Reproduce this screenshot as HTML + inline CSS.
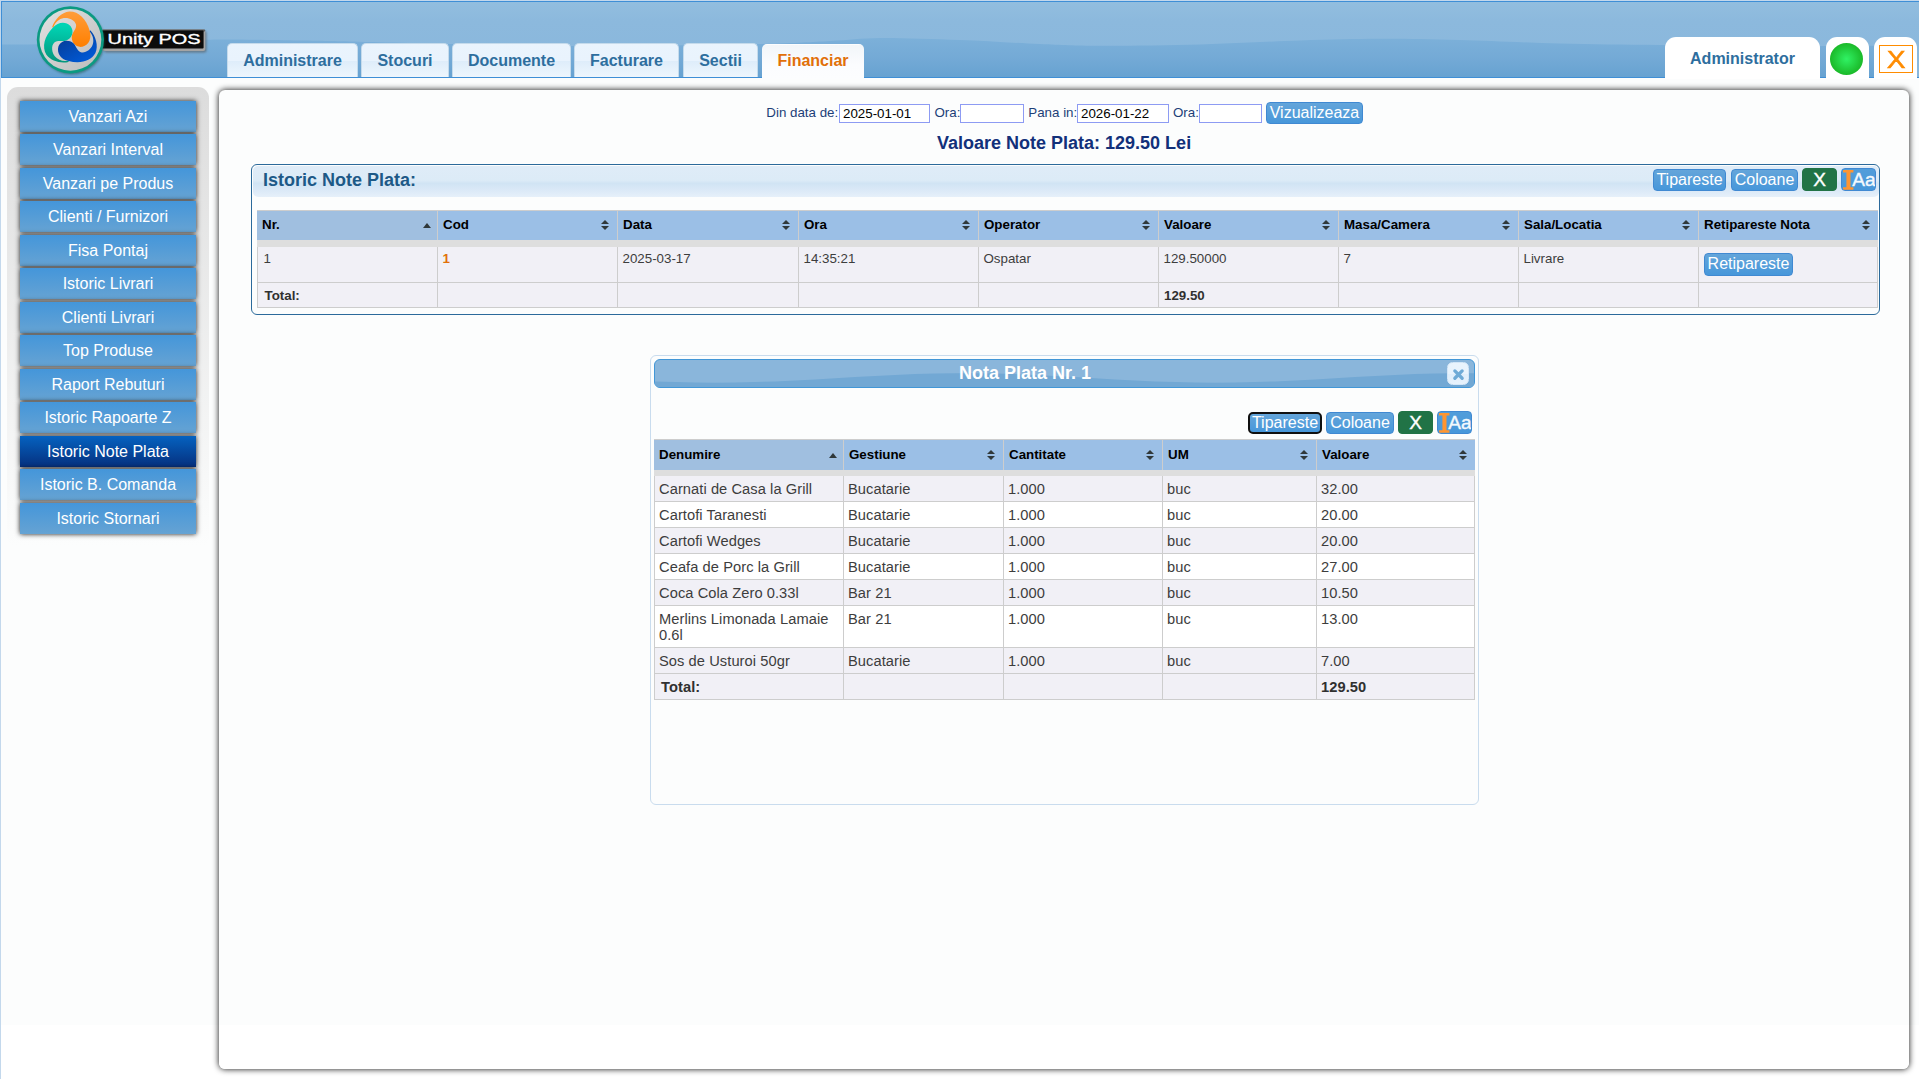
<!DOCTYPE html>
<html lang="ro">
<head>
<meta charset="utf-8">
<title>Unity POS</title>
<style>
*{box-sizing:border-box}
html,body{margin:0;padding:0}
body{width:1919px;height:1079px;overflow:hidden;position:relative;background:#fcfdfd;font-family:"Liberation Sans",Arial,sans-serif;font-size:13.33px;color:#222}
#bottomfade{position:absolute;left:0;top:1025px;width:1919px;height:54px;background:#fff}
#leftline{position:absolute;left:0;top:0;width:1px;height:1079px;background:#c3d8ec}
#topline{position:absolute;left:0;top:0;width:1919px;height:1px;background:#c3d8ec}
/* header */
#hdr{position:absolute;left:1px;top:1px;width:1930px;height:77px;border:1px solid #3f8fd6;background:linear-gradient(#92bedf 0,#8cb9dd 25%,#89b7dc 100%);overflow:hidden}
#hdr svg.wave{position:absolute;left:0;top:0}
.tab{position:absolute;top:43px;height:34px;border:1px solid #c5dbec;border-bottom:0;border-radius:5px 5px 0 0;font-weight:bold;font-size:16px;color:#2e6e9e;text-align:center;line-height:18px;padding-top:8px;
 background:linear-gradient(#eaf4fd 0,#e9f3fd 50%,#deedfa 52%,#eef6fd 100%)}
.tab.act{top:44px;padding-top:7px;background:linear-gradient(#f2f6f9,#fbfcfe 60%,#fcfdfe);color:#e17009;border-color:transparent;height:34.5px}
.rtab{position:absolute;background:#fff;border-radius:11px 11px 0 0;top:37px;height:42px}
/* sidebar */
#side{position:absolute;left:7px;top:87px;width:202px;height:460px;border-radius:11px;background:linear-gradient(#dcdcdc,#fcfdfd)}
.sb{position:absolute;left:20px;width:176px;height:31px;color:#fff;font-size:16px;text-align:center;line-height:31px;background:linear-gradient(#4496da,#66a3d3);box-shadow:0 0 5px rgba(0,0,0,.9)}
.sb.act{background:linear-gradient(#0562c0,#06307e)}
/* main */
#main{position:absolute;left:219px;top:90px;width:1690px;height:979px;border-radius:6px;background:#fcfdfd;box-shadow:0 0 6px rgba(0,0,0,.95)}
#mainfade{position:absolute;left:219px;top:1025px;width:1690px;height:44px;background:#fff;border-radius:0 0 6px 6px}
.btn{position:absolute;background:linear-gradient(#64a5da,#4797da);color:#fff;border:1px solid #4089d2;border-radius:4px;font-size:16px;text-align:center;white-space:nowrap}
.abs{position:absolute}

.lbl{font-size:13.33px;color:#1c3f78;line-height:16px;white-space:nowrap}
.inp{position:absolute;top:104px;height:18.5px;border:1px solid #8d9bf3;background:#fff;font-size:13.33px;color:#000;line-height:17.5px;padding-left:3px;white-space:nowrap}
.btn.xg{background:#217346;border-color:#217346;font-size:19px;-webkit-text-stroke:.4px #fff}
.btn.aa{background:linear-gradient(#529dda,#4797da);overflow:hidden}
.btn.aa svg.ib{position:absolute;left:1px;top:1px}
.btn.aa span{-webkit-text-stroke:.4px #f4f9fd;position:absolute;left:10.3px;top:0;font-size:19px;line-height:22px;color:#f4f9fd}
.btn.foc{border:2px solid #101010;border-radius:5px}
table.grid{position:absolute;border-collapse:separate;border-spacing:0;table-layout:fixed;font-size:13.33px;color:#3d3d3d}
table.grid th{position:relative;height:30px;background:#9bbfe6;border-top:1px solid #cdcdcd;border-left:1px solid #cdcdcd;color:#000;font-weight:bold;font-size:13.33px;text-align:left;padding:0 0 2px 5px;vertical-align:middle;white-space:nowrap}
table.grid th:first-child{border-left:0;padding-left:5px}
table.grid th.asc{background:#a0bfe0}
table.grid th:before,table.grid th:after{content:"";position:absolute;right:8px;border-left:4px solid transparent;border-right:4px solid transparent}
table.grid th:before{top:9px;border-bottom:4.5px solid #30383a}
table.grid th:after{top:15px;border-top:4.5px solid #30383a}
table.grid th.asc:before{top:12px;border-bottom-width:5px;right:6px}
table.grid th.asc:after{display:none}
table.grid tr.band td{height:7px;background:#dedede;border:0;padding:0}
table.grid td{background:#fff;border-left:1px solid #cdcdcd;border-bottom:1px solid #cdcdcd;padding:3.5px 5px 0 4.5px;vertical-align:top;line-height:16px}
table.grid td:last-child{border-right:1px solid #cdcdcd}
table.g1 td{background:#f1f0f6}
table.grid tr.tot td{font-weight:bold;color:#222}
table.g2{font-size:14.67px}
table.g2 td{font-size:14.67px;line-height:16px;padding:5px 4px 0 4px;letter-spacing:.07px}
table.g2 tr.tot td{padding-left:6px;color:#303030}
table.g2 tr.tot td:last-child{padding-left:4px}
table.g1 td:first-child{padding-left:5.5px}
table.g1 tr.tot td{padding-top:4.5px;padding-left:5px;color:#303030}
table.g1 tr.tot td:first-child{padding-left:6.5px}
table.g2 tr{height:26px}
table.g2 tr.band{height:auto}
table.g2 tr.band td{height:6px}
table.g2 th{height:31px;padding-bottom:1px}
table.g2 th:before{top:10px}
table.g2 th:after{top:16px}
table.g2 th.asc:before{top:13px}
table.g2 tr.o td{background:#f1f0f6}
</style>
</head>
<body>
<div id="bottomfade"></div>
<div id="topline"></div>
<div id="leftline"></div>

<div id="hdr">
<svg class="wave" width="1915" height="75" viewBox="0 0 1915 75"><defs><linearGradient id="wg" x1="0" y1="0" x2="0" y2="1"><stop offset="0" stop-color="#7cb0d9"/><stop offset="0.5" stop-color="#74aad6"/><stop offset="1" stop-color="#67a2d1"/></linearGradient></defs><path d="M-2.0,42.5 C39.7,42.3 113.0,42.6 148.0,41.8 C183.0,41.0 183.0,38.3 208.0,37.8 C233.0,37.2 273.0,38.2 298.0,38.5 C323.0,38.8 328.0,39.0 358.0,39.7 C388.0,40.4 438.0,41.8 478.0,42.5 C518.0,43.2 551.3,44.1 598.0,44.0 C644.7,43.9 719.7,42.8 758.0,42.0 C796.3,41.2 808.0,40.0 828.0,39.0 C848.0,38.0 856.3,36.2 878.0,36.0 C899.7,35.8 931.3,37.0 958.0,38.0 C984.7,39.0 1014.7,41.0 1038.0,42.0 C1061.3,43.0 1071.3,43.7 1098.0,43.8 C1124.7,43.9 1164.7,43.4 1198.0,42.5 C1231.3,41.6 1268.0,39.5 1298.0,38.5 C1328.0,37.5 1351.3,36.8 1378.0,36.8 C1404.7,36.7 1428.0,37.2 1458.0,38.0 C1488.0,38.8 1524.7,40.7 1558.0,41.5 C1591.3,42.3 1621.3,42.6 1658.0,43.0 C1694.7,43.4 1735.2,43.9 1778.0,44.0 C1820.8,44.1 1878.3,43.7 1915.0,43.5 L1915,75 L-2,75 Z" fill="url(#wg)"/></svg>
</div>

<!-- tabs -->
<div class="tab" style="left:227px;width:131px">Administrare</div>
<div class="tab" style="left:361px;width:88px">Stocuri</div>
<div class="tab" style="left:452px;width:119px">Documente</div>
<div class="tab" style="left:574px;width:105px">Facturare</div>
<div class="tab" style="left:683px;width:75px">Sectii</div>
<div class="tab act" style="left:762px;width:102px">Financiar</div>

<div class="rtab" style="left:1665px;width:155px;font-weight:bold;font-size:16px;color:#2e6e9e;text-align:center;line-height:18px;padding-top:13px">Administrator</div>
<div class="rtab" style="left:1826px;width:43px"><div class="abs" style="left:4px;top:6px;width:33px;height:32px;border-radius:50%;background:radial-gradient(ellipse at 50% 50%,#30f264 0,#1fc535 55%,#12a412 100%)"></div></div>
<div class="rtab" style="left:1874px;width:43px"><div class="abs" style="left:5px;top:8px;width:34px;height:28px;border:1px solid #ff8c00;color:#ff8c00;font-size:24.5px;line-height:27px;text-align:center;-webkit-text-stroke:.5px #ff8c00"><span style="display:inline-block;transform:scaleX(1.15)">X</span></div></div>

<!-- logo -->
<svg class="abs" style="left:30px;top:0" width="185" height="80" viewBox="30 0 185 80">
<defs>
<linearGradient id="lgG" x1="0" y1="0" x2="1" y2="1"><stop offset="0" stop-color="#e2e2e2"/><stop offset="1" stop-color="#bcbcbc"/></linearGradient>
<linearGradient id="lgO" x1="0" y1="0" x2="0" y2="1"><stop offset="0" stop-color="#ff9d3a"/><stop offset="1" stop-color="#ff7f00"/></linearGradient>
<linearGradient id="lgT" x1=".93" y1=".75" x2=".07" y2=".25"><stop offset="0" stop-color="#00d4b4"/><stop offset="1" stop-color="#04957c"/></linearGradient>
<linearGradient id="lgB" x1=".25" y1=".93" x2=".75" y2=".07"><stop offset="0" stop-color="#063c96"/><stop offset="1" stop-color="#005ad8"/></linearGradient>
<filter id="ds" x="-20%" y="-20%" width="150%" height="150%"><feGaussianBlur stdDeviation="1.2"/></filter>
</defs>
<rect x="104" y="31" width="102.5" height="21.5" rx="2" fill="#555" opacity=".6" filter="url(#ds)"/>
<rect x="102" y="29.4" width="103.3" height="21.6" rx="2" fill="#a4a4a4"/><rect x="102" y="29.4" width="103.3" height="2" rx="1" fill="#5a5a5a"/><rect x="102" y="30.4" width="101.6" height="18.2" rx="1" fill="#0c0c0c"/>
<text x="107.5" y="44" font-family="'Liberation Sans',Arial,sans-serif" font-size="14.5" font-weight="normal" fill="#fff" stroke="#fff" stroke-width=".35" textLength="93" lengthAdjust="spacingAndGlyphs">Unity POS</text>
<circle cx="71.5" cy="41.5" r="33" fill="#24524a" opacity=".55" filter="url(#ds)"/>
<circle cx="70.4" cy="39.8" r="33.6" fill="#0b9a82"/>
<circle cx="70.4" cy="39.8" r="30.9" fill="url(#lgG)"/>
<g transform="translate(70.4,39.8)">
<path id="sw" d="M-18.2,-12.7 C-16,-20 -9,-27.5 -1,-28.3 C8,-28.5 16,-21 19.3,-9 C21.5,-2 19,5 12,7 C5,8 0.5,2 1.5,-4 C2.2,-8 6.5,-11 5.6,-15.3 C4.5,-20 -2,-22.5 -6.5,-21.8 C-11.5,-21 -15,-17.5 -16.7,-13.1 C-17.2,-12 -17.8,-12 -18.2,-12.7Z" fill="url(#lgO)"/>
<path d="M-18.2,-12.7 C-16,-20 -9,-27.5 -1,-28.3 C8,-28.5 16,-21 19.3,-9 C21.5,-2 19,5 12,7 C5,8 0.5,2 1.5,-4 C2.2,-8 6.5,-11 5.6,-15.3 C4.5,-20 -2,-22.5 -6.5,-21.8 C-11.5,-21 -15,-17.5 -16.7,-13.1 C-17.2,-12 -17.8,-12 -18.2,-12.7Z" fill="url(#lgB)" transform="rotate(120)"/>
<path d="M-18.2,-12.7 C-16,-20 -9,-27.5 -1,-28.3 C8,-28.5 16,-21 19.3,-9 C21.5,-2 19,5 12,7 C5,8 0.5,2 1.5,-4 C2.2,-8 6.5,-11 5.6,-15.3 C4.5,-20 -2,-22.5 -6.5,-21.8 C-11.5,-21 -15,-17.5 -16.7,-13.1 C-17.2,-12 -17.8,-12 -18.2,-12.7Z" fill="url(#lgT)" transform="rotate(240)"/>
</g>
</svg>

<!-- sidebar -->
<div id="side"></div>
<div class="sb" style="top:101px">Vanzari Azi</div>
<div class="sb" style="top:134px">Vanzari Interval</div>
<div class="sb" style="top:168px">Vanzari pe Produs</div>
<div class="sb" style="top:201px">Clienti / Furnizori</div>
<div class="sb" style="top:235px">Fisa Pontaj</div>
<div class="sb" style="top:268px">Istoric Livrari</div>
<div class="sb" style="top:302px">Clienti Livrari</div>
<div class="sb" style="top:335px">Top Produse</div>
<div class="sb" style="top:369px">Raport Rebuturi</div>
<div class="sb" style="top:402px">Istoric Rapoarte Z</div>
<div class="sb act" style="top:436px">Istoric Note Plata</div>
<div class="sb" style="top:469px">Istoric B. Comanda</div>
<div class="sb" style="top:503px">Istoric Stornari</div>

<!-- main panel -->
<div id="main"></div>
<div id="mainfade"></div>

<!-- form row -->
<div class="abs lbl" style="left:766.3px;top:105px">Din data de:</div>
<div class="inp" style="left:839px;width:91px"><span>2025-01-01</span></div>
<div class="abs lbl" style="left:934.5px;top:105px">Ora:</div>
<div class="inp" style="left:960px;width:64px"></div>
<div class="abs lbl" style="left:1028.3px;top:105px">Pana in:</div>
<div class="inp" style="left:1077px;width:92px"><span>2026-01-22</span></div>
<div class="abs lbl" style="left:1173px;top:105px">Ora:</div>
<div class="inp" style="left:1199px;width:63px"></div>
<div class="btn" style="left:1266px;top:102px;width:97px;height:22px;line-height:19px">Vizualizeaza</div>
<div class="abs" style="left:937px;top:133px;width:254px;font-size:18px;font-weight:bold;color:#12307a;white-space:nowrap;line-height:21px">Valoare Note Plata: 129.50 Lei</div>

<!-- widget box -->
<div class="abs" style="left:251px;top:164px;width:1629px;height:151px;border:1px solid #2b6a9b;border-radius:6px;background:#fcfdfd"></div>
<div class="abs" style="left:253px;top:166px;width:1625.5px;height:31px;border-radius:5px;background:linear-gradient(#dfecf8 0,#dcebf7 46%,#d1e4f4 56%,#dbe9f7 78%,#e6f0fa 100%)"></div>
<div class="abs" style="left:263px;top:170px;font-size:18px;font-weight:bold;color:#1d5987;line-height:21px;white-space:nowrap">Istoric Note Plata:</div>
<div class="btn" style="left:1653px;top:169px;width:73px;height:22px;line-height:19px">Tipareste</div>
<div class="btn" style="left:1731px;top:169px;width:67px;height:22px;line-height:19px">Coloane</div>
<div class="btn xg" style="left:1802px;top:168px;width:35px;height:23px;line-height:21px">X</div>
<div class="btn aa" style="left:1841px;top:168px;width:35px;height:23px"><svg class="ib" width="11" height="20" viewBox="0 0 11 20"><path d="M0,0H10.4V2.6H7.5V17.2H10.4V19.8H0V17.2H3.4V2.6H0Z" fill="#ff9530"/></svg><span>Aa</span></div>

<table class="grid g1" style="left:257px;top:210px;width:1621px">
<colgroup><col style="width:180px"><col style="width:180px"><col style="width:181px"><col style="width:180px"><col style="width:180px"><col style="width:180px"><col style="width:180px"><col style="width:180px"><col style="width:180px"></colgroup>
<thead><tr><th class="asc">Nr.</th><th>Cod</th><th>Data</th><th>Ora</th><th>Operator</th><th>Valoare</th><th>Masa/Camera</th><th>Sala/Locatia</th><th>Retipareste Nota</th></tr>
<tr class="band"><td colspan="9"></td></tr></thead>
<tbody>
<tr style="height:36px"><td>1</td><td><b style="color:#e17009">1</b></td><td>2025-03-17</td><td>14:35:21</td><td>Ospatar</td><td>129.50000</td><td>7</td><td>Livrare</td><td style="position:relative"><div class="btn" style="left:5px;top:6px;width:89px;height:23px;line-height:20px">Retipareste</div></td></tr>
<tr class="tot" style="height:25px"><td>Total:</td><td></td><td></td><td></td><td></td><td>129.50</td><td></td><td></td><td></td></tr>
</tbody></table>

<!-- dialog -->
<div class="abs" style="left:650px;top:355px;width:828.5px;height:450px;border:1px solid #c9dcee;border-radius:6px;background:#fcfdfd"></div>
<div class="abs" id="dtitle" style="left:654px;top:359px;width:821px;height:29px;border:1px solid #4297d7;border-radius:6px;background:#8ab6db;overflow:hidden">
<svg class="abs" style="left:0;top:0" width="819" height="27" viewBox="0 0 819 27" preserveAspectRatio="none"><path d="M0,21.4 L20,22.1 L40,22.6 L60,22.7 L80,22.5 L100,22.1 L120,21.4 L140,20.5 L160,19.4 L180,18.2 L200,17.0 L220,15.9 L240,14.9 L260,14.1 L280,13.5 L300,13.2 L320,13.2 L340,13.5 L360,14.1 L380,14.9 L400,16.0 L420,17.1 L440,18.3 L460,19.4 L480,20.5 L500,21.4 L520,22.1 L540,22.6 L560,22.7 L580,22.5 L600,22.1 L620,21.4 L640,20.5 L660,19.4 L680,18.2 L700,17.0 L720,15.9 L740,14.9 L760,14.1 L780,13.5 L800,13.2 L819,13.2 L819,27 L0,27 Z" fill="#72a8d4"/></svg>
</div>
<div class="abs" style="left:959px;top:363px;font-size:18px;font-weight:bold;color:#fff;line-height:21px;white-space:nowrap">Nota Plata Nr. 1</div>
<div class="abs" style="left:1447px;top:362px;width:21.7px;height:23px;border:1px solid #d3e6f7;border-radius:5.5px;background:linear-gradient(#e9f4fd 0,#e8f3fd 50%,#dfeefb 52%,#e7f2fc 100%)">
<svg class="abs" style="left:-1px;top:-1px" width="22" height="23" viewBox="0 0 22 23"><path d="M7.85,8.95 L15.15,16.25 M15.15,8.95 L7.85,16.25" stroke="#6eaad6" stroke-width="3.3" stroke-linecap="round" fill="none"/></svg>
</div>
<div class="btn foc" style="left:1248px;top:412px;width:74px;height:22px;line-height:17.5px">Tipareste</div>
<div class="btn" style="left:1326px;top:412px;width:68px;height:22px;line-height:19px">Coloane</div>
<div class="btn xg" style="left:1398px;top:411px;width:35px;height:23px;line-height:21px">X</div>
<div class="btn aa" style="left:1437px;top:411px;width:35px;height:23px"><svg class="ib" width="11" height="20" viewBox="0 0 11 20"><path d="M0,0H10.4V2.6H7.5V17.2H10.4V19.8H0V17.2H3.4V2.6H0Z" fill="#ff9530"/></svg><span>Aa</span></div>

<table class="grid g2" style="left:654px;top:439px;width:820.5px">
<colgroup><col style="width:189px"><col style="width:160px"><col style="width:159px"><col style="width:154px"><col style="width:158.5px"></colgroup>
<thead><tr><th class="asc">Denumire</th><th>Gestiune</th><th>Cantitate</th><th>UM</th><th>Valoare</th></tr>
<tr class="band"><td colspan="5"></td></tr></thead>
<tbody>
<tr class="o"><td>Carnati de Casa la Grill</td><td>Bucatarie</td><td>1.000</td><td>buc</td><td>32.00</td></tr>
<tr><td>Cartofi Taranesti</td><td>Bucatarie</td><td>1.000</td><td>buc</td><td>20.00</td></tr>
<tr class="o"><td>Cartofi Wedges</td><td>Bucatarie</td><td>1.000</td><td>buc</td><td>20.00</td></tr>
<tr><td>Ceafa de Porc la Grill</td><td>Bucatarie</td><td>1.000</td><td>buc</td><td>27.00</td></tr>
<tr class="o"><td>Coca Cola Zero 0.33l</td><td>Bar 21</td><td>1.000</td><td>buc</td><td>10.50</td></tr>
<tr style="height:42px"><td>Merlins Limonada Lamaie 0.6l</td><td>Bar 21</td><td>1.000</td><td>buc</td><td>13.00</td></tr>
<tr class="o"><td>Sos de Usturoi 50gr</td><td>Bucatarie</td><td>1.000</td><td>buc</td><td>7.00</td></tr>
<tr class="o tot"><td>Total:</td><td></td><td></td><td></td><td>129.50</td></tr>
</tbody></table>


</body>
</html>
